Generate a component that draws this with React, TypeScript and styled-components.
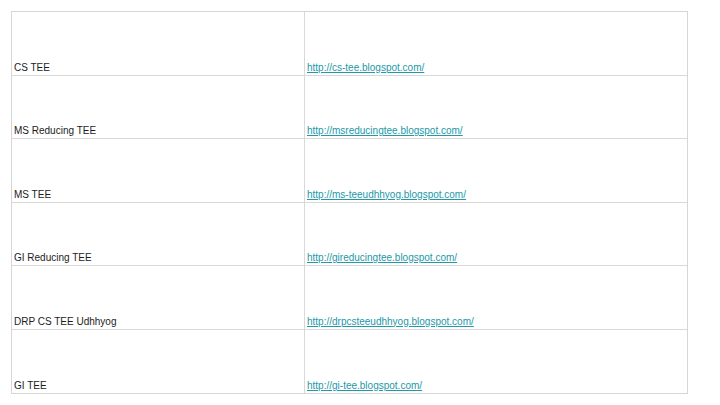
import styled, { createGlobalStyle } from 'styled-components';

interface Site {
  name: string;
  url: string;
}

const sites: Site[] = [
  { name: 'CS TEE', url: 'http://cs-tee.blogspot.com/' },
  { name: 'MS Reducing TEE', url: 'http://msreducingtee.blogspot.com/' },
  { name: 'MS TEE', url: 'http://ms-teeudhhyog.blogspot.com/' },
  { name: 'GI Reducing TEE', url: 'http://gireducingtee.blogspot.com/' },
  { name: 'DRP CS TEE Udhhyog', url: 'http://drpcsteeudhhyog.blogspot.com/' },
  { name: 'GI TEE', url: 'http://gi-tee.blogspot.com/' },
];

const App = () => {
  return (
    <>
      <GlobalStyle />
      <Page>
        <Sheet>
          {sites.map((site) => (
            <Row key={site.name}>
              <NameCell>{site.name}</NameCell>
              <LinkCell>
                <SiteLink href={site.url}>{site.url}</SiteLink>
              </LinkCell>
            </Row>
          ))}
        </Sheet>
      </Page>
    </>
  );
};

export default App;

const GlobalStyle = createGlobalStyle`
  html, body {
    margin: 0;
    padding: 0;
    background: #ffffff;
  }
  body {
    font-family: 'Liberation Sans', Arial, sans-serif;
  }
`;

const Page = styled.div`
  width: 720px;
  height: 405px;
  padding: 11px 0 0 11px;
  box-sizing: border-box;
`;

const Sheet = styled.div`
  width: 677px;
  display: grid;
  grid-template-rows: repeat(6, 63.5px);
  border: 1px solid #d6d6d6;
  box-sizing: border-box;
`;

const Row = styled.div`
  display: grid;
  grid-template-columns: 293px 1fr;
  border-bottom: 1px solid #d9d9d9;
  &:last-child {
    border-bottom: none;
  }
`;

const NameCell = styled.div`
  display: flex;
  align-items: flex-end;
  padding: 0 2px 1px 2px;
  font-size: 10px;
  line-height: 12px;
  color: #1c1c1c;
  white-space: nowrap;
  border-right: 1px solid #d9d9d9;
`;

const LinkCell = styled(NameCell)`
  border-right: none;
`;

const SiteLink = styled.a`
  color: #2199a8;
  text-decoration: underline;
`;
